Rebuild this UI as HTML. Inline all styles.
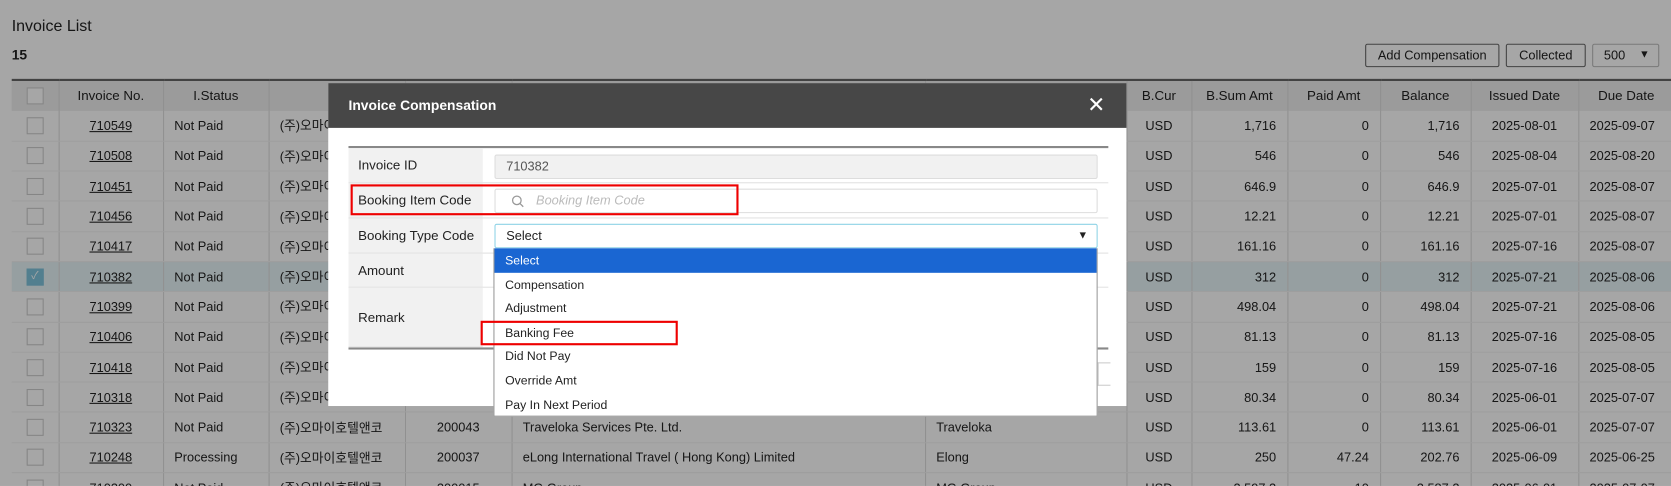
<!DOCTYPE html>
<html><head><meta charset="utf-8"><style>
*{box-sizing:border-box;margin:0;padding:0}
body{width:1671px;height:485px;overflow:hidden;background:#a5a5a5;font-family:"Liberation Sans","Noto Sans CJK KR",sans-serif;font-size:12px;color:#222;position:relative}
.wrap{position:absolute;left:0;top:0;width:1568px;height:456px;transform:scale(1.06569);transform-origin:0 0;overflow:hidden}
.page{position:absolute;left:0;top:0;width:1568px;height:456px;background:#fff;overflow:hidden}
.ov{position:absolute;left:0;top:0;width:1568px;height:456px;background:rgba(0,0,0,.35)}
.abs{position:absolute}
table.g{position:absolute;left:11px;top:74px;border-collapse:collapse;table-layout:fixed;width:1560px}
table.g th{height:29px;background:#eee;font-weight:normal;font-size:12.5px;border-right:1px solid #ddd;border-top:2px solid #666}
table.g td{height:28.3px;border-right:1px solid #ddd;padding:0 10px;white-space:nowrap;overflow:hidden;text-align:left}
table.g tr.rw td{border-bottom:1px solid #f3f3f3}
table.g td.c{text-align:center}table.g td.r{text-align:right}
.cb{display:inline-block;width:16px;height:16px;border:1px solid #ccc;background:#fff;vertical-align:middle}
u{text-decoration:underline}
.btn{position:absolute;top:41px;height:22px;border:1px solid #666;border-radius:2px;background:#fff;font-size:12px;line-height:20px;text-align:center}
.modal{position:absolute;left:308px;top:78px;width:749px;height:303px;background:#fff}
.mh{height:42px;background:#474747;color:#fff;font-weight:bold;font-size:13px;line-height:42px;padding-left:19px}
.lbl{position:absolute;left:19px;width:126px;background:#f1f1f1;font-size:12.5px;padding-left:9px;border-bottom:1px solid #e2e2e2}
.row{position:absolute;left:19px;width:713px;border-bottom:1px solid #e2e2e2}
.inp{position:absolute;left:156px;width:566px;height:23px;border:1px solid #ddd;border-radius:2px;font-size:12px;line-height:21px;padding-left:10px}
.dd{position:absolute;left:463px;top:233px;width:567px;height:158px;background:#fff;border:1px solid #999;border-top:none;font-size:11.5px}
.dd div{height:22.6px;line-height:24px;padding-left:10px}
.red{position:absolute;border:2px solid #e00}
</style></head><body>
<div class="wrap">
<div class="page">
<div class="abs" style="left:11px;top:16px;font-size:15px">Invoice List</div>
<div class="abs" style="left:11px;top:44px;font-size:13px;font-weight:bold">15</div>
<div class="btn" style="left:1281px;width:126px">Add Compensation</div>
<div class="btn" style="left:1413px;width:75px">Collected</div>
<div class="btn" style="left:1494px;width:63px;border-color:#bbb;text-align:left;padding-left:10px">500 <span style="position:absolute;right:8px;font-size:10px">▼</span></div>
<table class="g">
<colgroup><col style="width:44px"><col style="width:98px"><col style="width:99px"><col style="width:128px"><col style="width:100px"><col style="width:388px"><col style="width:189px"><col style="width:61px"><col style="width:90px"><col style="width:87px"><col style="width:85px"><col style="width:101px"><col style="width:90px"></colgroup>
<tr><th><span class="cb"></span></th><th>Invoice No.</th><th>I.Status</th><th>Co</th><th></th><th></th><th></th><th>B.Cur</th><th>B.Sum Amt</th><th>Paid Amt</th><th>Balance</th><th>Issued Date</th><th>Due Date</th></tr>
<tr class="rw"><td class="c"><span class="cb"></span></td><td class="c"><u>710549</u></td><td>Not Paid</td><td>(주)오마이호텔앤코</td><td></td><td></td><td></td><td class="c">USD</td><td class="r">1,716</td><td class="r">0</td><td class="r">1,716</td><td class="c">2025-08-01</td><td>2025-09-07</td></tr>
<tr class="rw"><td class="c"><span class="cb"></span></td><td class="c"><u>710508</u></td><td>Not Paid</td><td>(주)오마이호텔앤코</td><td></td><td></td><td></td><td class="c">USD</td><td class="r">546</td><td class="r">0</td><td class="r">546</td><td class="c">2025-08-04</td><td>2025-08-20</td></tr>
<tr class="rw"><td class="c"><span class="cb"></span></td><td class="c"><u>710451</u></td><td>Not Paid</td><td>(주)오마이호텔앤코</td><td></td><td></td><td></td><td class="c">USD</td><td class="r">646.9</td><td class="r">0</td><td class="r">646.9</td><td class="c">2025-07-01</td><td>2025-08-07</td></tr>
<tr class="rw"><td class="c"><span class="cb"></span></td><td class="c"><u>710456</u></td><td>Not Paid</td><td>(주)오마이호텔앤코</td><td></td><td></td><td></td><td class="c">USD</td><td class="r">12.21</td><td class="r">0</td><td class="r">12.21</td><td class="c">2025-07-01</td><td>2025-08-07</td></tr>
<tr class="rw"><td class="c"><span class="cb"></span></td><td class="c"><u>710417</u></td><td>Not Paid</td><td>(주)오마이호텔앤코</td><td></td><td></td><td></td><td class="c">USD</td><td class="r">161.16</td><td class="r">0</td><td class="r">161.16</td><td class="c">2025-07-16</td><td>2025-08-07</td></tr>
<tr class="rw" style="background:#e6f4f7"><td class="c"><span class="cb" style="background:#7ec3dc;border-color:#7ec3dc;color:#fff;font-size:10px;line-height:14px;text-align:center">✓</span></td><td class="c"><u>710382</u></td><td>Not Paid</td><td>(주)오마이호텔앤코</td><td></td><td></td><td></td><td class="c">USD</td><td class="r">312</td><td class="r">0</td><td class="r">312</td><td class="c">2025-07-21</td><td>2025-08-06</td></tr>
<tr class="rw"><td class="c"><span class="cb"></span></td><td class="c"><u>710399</u></td><td>Not Paid</td><td>(주)오마이호텔앤코</td><td></td><td></td><td></td><td class="c">USD</td><td class="r">498.04</td><td class="r">0</td><td class="r">498.04</td><td class="c">2025-07-21</td><td>2025-08-06</td></tr>
<tr class="rw"><td class="c"><span class="cb"></span></td><td class="c"><u>710406</u></td><td>Not Paid</td><td>(주)오마이호텔앤코</td><td></td><td></td><td></td><td class="c">USD</td><td class="r">81.13</td><td class="r">0</td><td class="r">81.13</td><td class="c">2025-07-16</td><td>2025-08-05</td></tr>
<tr class="rw"><td class="c"><span class="cb"></span></td><td class="c"><u>710418</u></td><td>Not Paid</td><td>(주)오마이호텔앤코</td><td></td><td></td><td></td><td class="c">USD</td><td class="r">159</td><td class="r">0</td><td class="r">159</td><td class="c">2025-07-16</td><td>2025-08-05</td></tr>
<tr class="rw"><td class="c"><span class="cb"></span></td><td class="c"><u>710318</u></td><td>Not Paid</td><td>(주)오마이호텔앤코</td><td></td><td></td><td></td><td class="c">USD</td><td class="r">80.34</td><td class="r">0</td><td class="r">80.34</td><td class="c">2025-06-01</td><td>2025-07-07</td></tr>
<tr class="rw"><td class="c"><span class="cb"></span></td><td class="c"><u>710323</u></td><td>Not Paid</td><td>(주)오마이호텔앤코</td><td class="c">200043</td><td>Traveloka Services Pte. Ltd.</td><td>Traveloka</td><td class="c">USD</td><td class="r">113.61</td><td class="r">0</td><td class="r">113.61</td><td class="c">2025-06-01</td><td>2025-07-07</td></tr>
<tr class="rw"><td class="c"><span class="cb"></span></td><td class="c"><u>710248</u></td><td>Processing</td><td>(주)오마이호텔앤코</td><td class="c">200037</td><td>eLong International Travel ( Hong Kong) Limited</td><td>Elong</td><td class="c">USD</td><td class="r">250</td><td class="r">47.24</td><td class="r">202.76</td><td class="c">2025-06-09</td><td>2025-06-25</td></tr>
<tr class="rw"><td class="c"><span class="cb"></span></td><td class="c"><u>710300</u></td><td>Not Paid</td><td>(주)오마이호텔앤코</td><td class="c">200015</td><td>MG Group</td><td>MG Group</td><td class="c">USD</td><td class="r">2,597.2</td><td class="r">10</td><td class="r">2,587.2</td><td class="c">2025-06-01</td><td>2025-07-07</td></tr>
</table>
</div>
<div class="ov"></div>
<div class="modal">
<div class="mh">Invoice Compensation<span style="position:absolute;right:20px;top:0;font-size:20px;font-weight:normal">✕</span></div>
<div class="abs" style="left:19px;top:59px;width:713px;border-top:2px solid #888"></div>
<div class="row" style="top:61px;height:33px"><div class="lbl" style="left:0;top:0;height:33px;line-height:33px">Invoice ID</div><div class="inp" style="left:137px;top:6px;background:#f1f1f1;color:#555">710382</div></div>
<div class="row" style="top:94px;height:33px"><div class="lbl" style="left:0;top:0;height:33px;line-height:33px">Booking Item Code</div><div class="inp" style="left:137px;top:5px;color:#bbb;font-style:italic;padding-left:38px"><svg style="position:absolute;left:15px;top:5px" width="12" height="12" viewBox="0 0 12 12"><circle cx="5" cy="5" r="4" fill="none" stroke="#999" stroke-width="1.2"/><path d="M8 8l3 3" stroke="#999" stroke-width="1.2"/></svg>Booking Item Code</div></div>
<div class="row" style="top:127px;height:33px"><div class="lbl" style="left:0;top:0;height:33px;line-height:33px">Booking Type Code</div><div class="inp" style="left:137px;top:5px;border-color:#8fd3e6">Select<span style="position:absolute;right:8px;font-size:10px">▼</span></div></div>
<div class="row" style="top:160px;height:32px"><div class="lbl" style="left:0;top:0;height:32px;line-height:32px">Amount</div></div>
<div class="row" style="top:192px;height:58px;border-bottom:2px solid #888"><div class="lbl" style="left:0;top:0;height:56px;line-height:56px">Remark</div></div>
<div class="abs" style="left:722px;top:262px;width:12px;height:22px;border:1px solid #ccc;border-right:none"></div>
</div>
<div class="dd"><div style="background:#1a66d2;color:#fff">Select</div><div>Compensation</div><div>Adjustment</div><div>Banking Fee</div><div>Did Not Pay</div><div>Override Amt</div><div>Pay In Next Period</div></div>
<div class="red" style="left:329px;top:173px;width:364px;height:29px"></div>
<div class="red" style="left:451px;top:301px;width:185px;height:23px"></div>
</div>
</body></html>
